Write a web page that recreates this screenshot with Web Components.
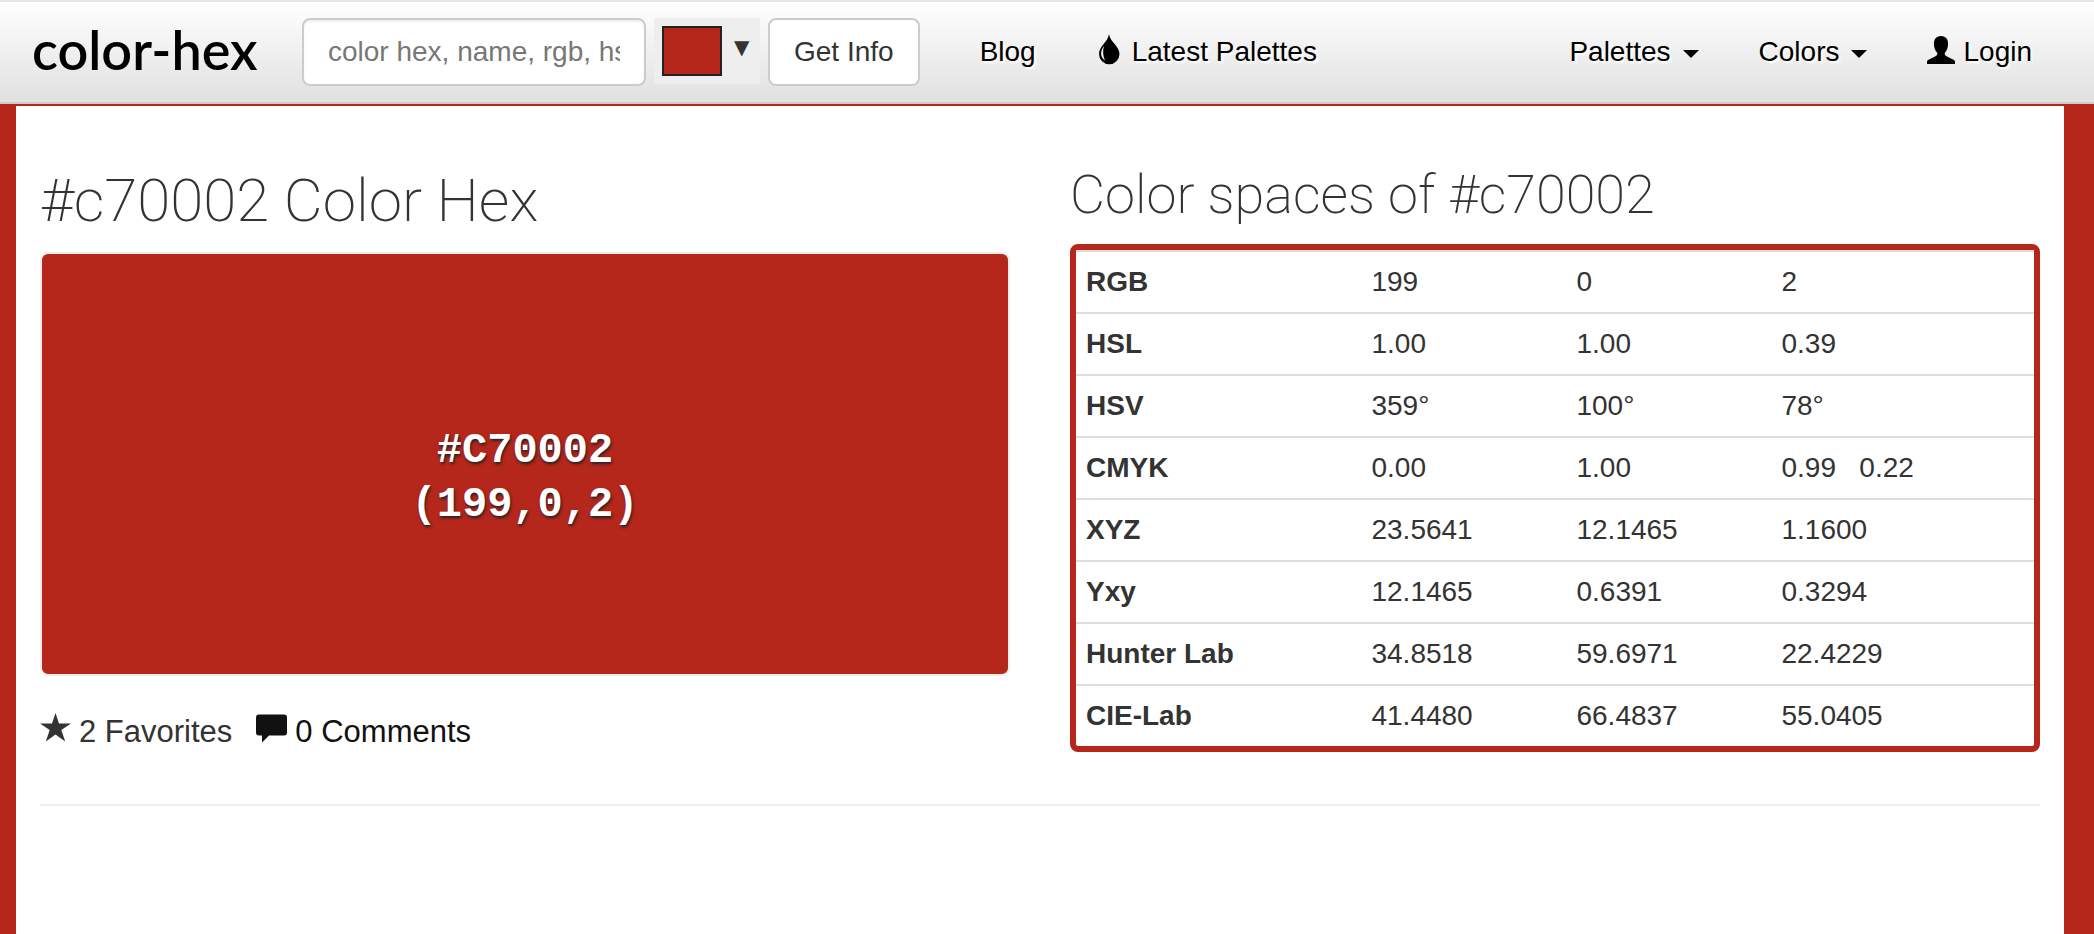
<!DOCTYPE html>
<html lang="en">
<head>
<meta charset="utf-8">
<title>#c70002 Color Hex</title>
<style>
  html, body { margin: 0; }
  body {
    --accent: #b5261b;
    min-height: 100vh;
    background: var(--accent);
    color: #333;
    font-family: "Liberation Sans", Arial, sans-serif;
    font-size: 28px;
    line-height: 40px;
  }
</style>
</head>
<body>
<hex-app></hex-app>

<template id="t-app">
  <style>
    :host { display: flex; flex-direction: column; min-height: 100vh; }
    main { flex: 1; margin: 2px 30px 0 16px; padding: 58px 24px 40px; background: #fff; }
    .columns { display: grid; grid-template-columns: 1fr 1fr; gap: 60px; }
    h1, h2 { margin: 0; font-family: Roboto, "Liberation Sans", sans-serif; font-weight: 200; white-space: nowrap; }
    h1 { font-size: 60px; line-height: 74px; margin-bottom: 14px; }
    h2 { font-size: 54px; line-height: 62px; margin-bottom: 18px; }
    .stats { display: flex; gap: 24px; margin-top: 36px; }
    hr { margin: 52px 0 0; border: 0; border-top: 2px solid #eee; }
  </style>
  <hex-header></hex-header>
  <main>
    <div class="columns">
      <section>
        <h1>#c70002 Color Hex</h1>
        <color-swatch>
          <span slot="hex">#C70002</span>
          <span slot="rgb">(199,0,2)</span>
        </color-swatch>
        <div class="stats">
          <stat-link icon="star">2 Favorites</stat-link>
          <stat-link icon="comment" dark>0 Comments</stat-link>
        </div>
      </section>
      <section>
        <h2>Color spaces of #c70002</h2>
        <color-spaces></color-spaces>
      </section>
    </div>
    <hr>
  </main>
</template>

<template id="t-header">
  <style>
    :host {
      display: block; border-top: 2px solid #e7e7e7; border-bottom: 2px solid #ccc;
      background: linear-gradient(#fff, #e0e0e0);
    }
    header { display: flex; align-items: center; padding: 16px 32px; }
    .logo {
      flex: 0 0 270px; color: #000; text-decoration: none; white-space: nowrap;
      font-family: Lato, "Liberation Sans", sans-serif; font-size: 54px; font-weight: 600; line-height: 60px;
      padding-bottom: 4px;
    }
    nav { display: flex; margin-left: 30px; }
    nav.end { margin-left: auto; }
  </style>
  <header>
    <a class="logo" href="#">color-hex</a>
    <color-search></color-search>
    <nav aria-label="Main">
      <nav-link>Blog</nav-link>
      <nav-link icon="drop">Latest Palettes</nav-link>
    </nav>
    <nav class="end" aria-label="Browse">
      <nav-link menu>Palettes</nav-link>
      <nav-link menu>Colors</nav-link>
      <nav-link icon="user">Login</nav-link>
    </nav>
  </header>
</template>

<template id="t-search">
  <style>
    :host { display: block; }
    form { display: flex; align-items: flex-start; gap: 8px; margin: 0; }
    input, button { box-sizing: border-box; font: inherit; margin: 0; }
    input {
      width: 344px; height: 68px; padding: 0 24px; border: 2px solid #ccc; border-radius: 8px;
      background: #fff; color: #333; box-shadow: inset 0 2px 2px #0001;
    }
    input::placeholder { color: #777; opacity: 1; }
    .pick {
      display: flex; align-items: flex-start; gap: 12px; width: 106px; height: 66px;
      padding: 8px; border: 0; background: #eee; color: #333; line-height: 42px; font-size: 20px;
      font-family: "DejaVu Sans", sans-serif;
    }
    .chip { box-sizing: border-box; flex: none; width: 60px; height: 50px; border: 2px solid #222; background: var(--accent); }
    .go { height: 68px; padding: 0 24px; border: 2px solid #ccc; border-radius: 8px; background: #fff; color: #333; }
  </style>
  <form>
    <input type="text" aria-label="Color" placeholder="color hex, name, rgb, hsl">
    <button class="pick" type="button" aria-label="Pick a color"><span class="chip"></span><span>▼</span></button>
    <button class="go" type="submit">Get Info</button>
  </form>
</template>

<template id="t-nav">
  <style>
    :host { display: block; }
    a {
      display: flex; align-items: center; padding: 0 30px; color: #000; text-decoration: none;
      white-space: nowrap; text-shadow: 2px 2px 2px #fff;
    }
    ui-icon { width: 28px; height: 28px; margin: 0 8px 4px 0; }
    .caret { border: 8px solid transparent; border-top-color: #000; border-bottom: 0; margin: 4px 0 0 12px; }
  </style>
  <a href="#"><slot></slot></a>
</template>

<template id="t-icon">
  <style>
    :host { display: block; flex: none; }
    svg { display: block; width: 100%; height: 100%; fill: currentColor; overflow: visible; }
  </style>
</template>

<template id="t-swatch">
  <style>
    :host {
      display: flex; flex-direction: column; align-items: center; justify-content: center;
      box-sizing: border-box; height: 424px; padding-top: 28px; border: 2px solid #eee; border-radius: 8px;
      background: var(--accent); color: #fff; font-family: "Liberation Mono", "Courier New", monospace;
      font-size: 42px; line-height: 54px; font-weight: 700; text-shadow: 1px 2px 3px #222;
    }
  </style>
  <slot name="hex"></slot>
  <slot name="rgb"></slot>
</template>

<template id="t-stat">
  <style>
    :host { display: block; font-size: 31px; line-height: 40px; color: #333; }
    :host([dark]) { color: #111; }
    a { display: flex; align-items: center; gap: 8px; color: inherit; text-decoration: none; white-space: nowrap; }
    ui-icon { width: 31px; height: 31px; margin-bottom: 8px; }
  </style>
  <a href="#"><slot></slot></a>
</template>

<template id="t-spaces">
  <style>
    :host { display: block; border: 6px solid var(--accent); border-radius: 8px; }
    table { width: 100%; border-collapse: separate; border-spacing: 0; table-layout: fixed; }
    th, td { padding: 10px; border-top: 2px solid #ddd; text-align: left; white-space: pre; font-size: 28px; line-height: 40px; }
    col.name { width: 29.8%; }
    col.value { width: 21.4%; }
  </style>
  <table>
    <colgroup><col class="name"><col class="value"><col class="value"><col></colgroup>
    <tbody></tbody>
  </table>
</template>

<script>
  const ICONS = {
    star: '<path d="M15.5 0 19 10.600h12L21.300 17 25.200 28.500 15.500 21.400 5.800 28.500 9.700 17 0 10.600h12z"/>',
    comment: '<path d="M3 1.500h25q3 0 3 3v15q0 3-3 3H13L6 29.500v-7H3q-3 0-3-3v-15q0-3 3-3z"/>',
    drop: '<path fill-rule="evenodd" d="M13 -2C12 6 3 10 3 18a10 10 0 0 0 20.500 0C23.500 10 14 6 13 -2zM8 10C4 15 4 21 9 24.500 7 20 6.500 15 8 10z"/>',
    user: '<path d="M14 0c5 0 7.500 3.500 7 9-.2 3-1.200 5.500-3 7.500-.7 1.800-.2 3 1.500 3.800L27 24q1 .6 1 2v2H0v-2q0-1.400 1-2l7.500-3.700c1.700-.8 2.200-2 1.500-3.800-1.800-2-2.800-4.500-3-7.500-.5-5.500 2-9 7-9z"/>'
  };

  const SPACES = [
    ['RGB', '199', '0', '2'],
    ['HSL', '1.00', '1.00', '0.39'],
    ['HSV', '359°', '100°', '78°'],
    ['CMYK', '0.00', '1.00', '0.99   0.22'],
    ['XYZ', '23.5641', '12.1465', '1.1600'],
    ['Yxy', '12.1465', '0.6391', '0.3294'],
    ['Hunter Lab', '34.8518', '59.6971', '22.4229'],
    ['CIE-Lab', '41.4480', '66.4837', '55.0405']
  ];

  class Base extends HTMLElement {
    constructor() {
      super();
      this.attachShadow({ mode: 'open' });
    }
    connectedCallback() {
      if (this.shadowRoot.childNodes.length) return;
      const template = document.getElementById(this.constructor.template);
      this.shadowRoot.append(document.importNode(template.content, true));
      this.setup();
    }
    setup() {}
    addIcon(name) {
      const icon = document.createElement('ui-icon');
      icon.setAttribute('name', name);
      this.shadowRoot.querySelector('a').prepend(icon);
    }
  }

  class UiIcon extends Base {
    static template = 't-icon';
    setup() {
      const name = this.getAttribute('name');
      const size = name === 'star' || name === 'comment' ? 31 : 28;
      this.shadowRoot.innerHTML += `<svg viewBox="0 0 ${size} ${size}" aria-hidden="true">${ICONS[name]}</svg>`;
    }
  }
  class NavLink extends Base {
    static template = 't-nav';
    setup() {
      if (this.hasAttribute('icon')) this.addIcon(this.getAttribute('icon'));
      if (this.hasAttribute('menu')) {
        const caret = document.createElement('span');
        caret.className = 'caret';
        this.shadowRoot.querySelector('a').append(caret);
      }
    }
  }
  class StatLink extends Base {
    static template = 't-stat';
    setup() { this.addIcon(this.getAttribute('icon')); }
  }
  class ColorSpaces extends Base {
    static template = 't-spaces';
    setup() {
      this.shadowRoot.querySelector('tbody').innerHTML = SPACES.map(([name, ...values]) =>
        `<tr><th scope="row">${name}</th>${values.map(v => `<td>${v}</td>`).join('')}</tr>`).join('');
    }
  }
  class ColorSwatch extends Base { static template = 't-swatch'; }
  class ColorSearch extends Base { static template = 't-search'; }
  class HexHeader extends Base { static template = 't-header'; }
  class HexApp extends Base { static template = 't-app'; }

  customElements.define('ui-icon', UiIcon);
  customElements.define('nav-link', NavLink);
  customElements.define('stat-link', StatLink);
  customElements.define('color-spaces', ColorSpaces);
  customElements.define('color-swatch', ColorSwatch);
  customElements.define('color-search', ColorSearch);
  customElements.define('hex-header', HexHeader);
  customElements.define('hex-app', HexApp);
</script>
</body>
</html>
